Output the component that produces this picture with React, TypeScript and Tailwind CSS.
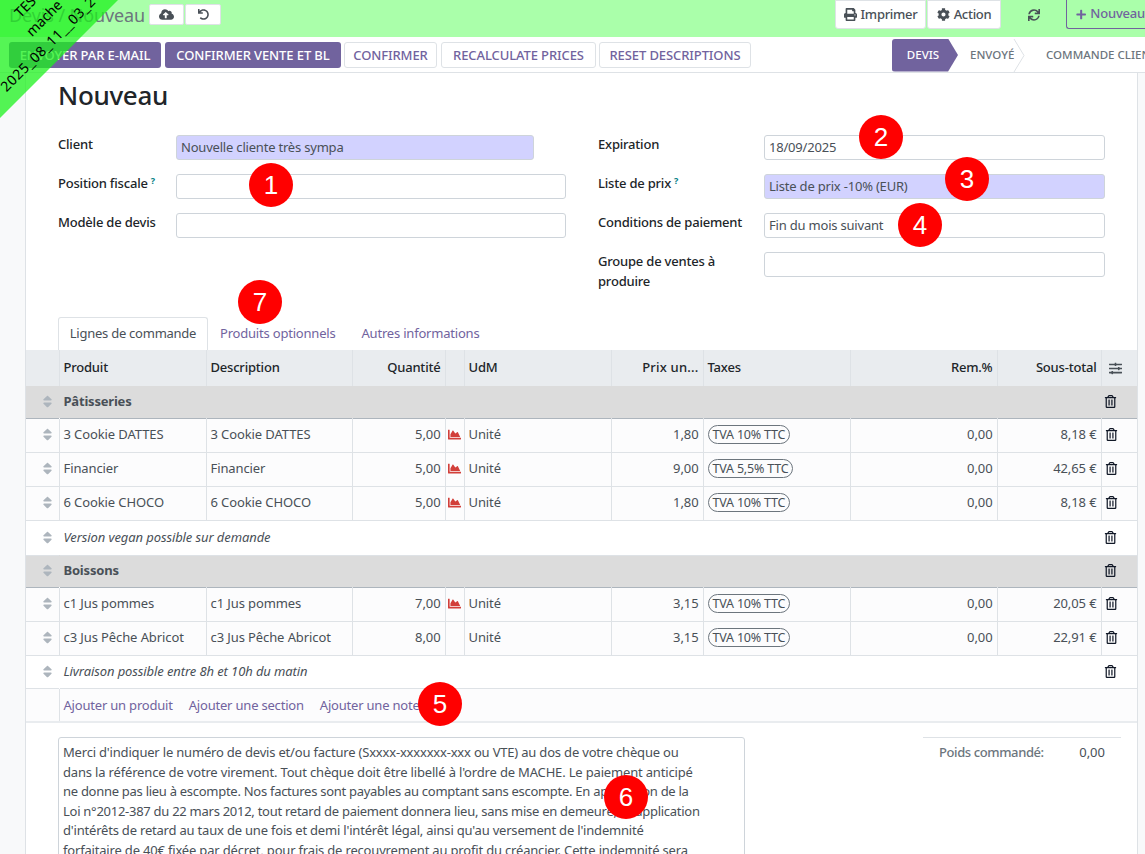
import React from "react";
import { FaCloudUploadAlt, FaUndo, FaPrint, FaCog, FaSync, FaPlus, FaRegTrashAlt, FaChartArea, FaSlidersH, FaSort } from "react-icons/fa";

function Badge({ n, cls }: { n: string; cls: string }) {
  return (
    <div className={"absolute z-20 h-[44px] w-[44px] rounded-full bg-[#ff0000] flex items-center justify-center text-white text-[26px] font-['Liberation_Sans'] " + cls}>{n}</div>
  );
}

function Field({ label, help, value, filled, short, right }: { label: React.ReactNode; help?: boolean; value?: string; filled?: boolean; short?: boolean; right?: boolean }) {
  return (
    <div className="flex h-[39px] items-start">
      <div className={(right ? "w-[166px]" : "w-[118px]") + " text-[13px] leading-[19.5px] font-medium text-[#212529] tracking-[-0.2px]"}>
        {label}
        {help && <sup className="ml-[3px] text-[9px] font-bold text-[#017e84]">?</sup>}
      </div>
      <div className={"h-[25px] rounded-[3px] border border-[#ced4da] px-1 text-[13px] leading-[23px] text-[#495057] tracking-[-0.2px] " + (filled ? "bg-[#d2d2ff] " : "bg-white ") + (short ? "w-[358px]" : right ? "w-[341px]" : "w-[390px]")}>
        {value}
      </div>
    </div>
  );
}

function Btn({ children, primary, cls }: { children: React.ReactNode; primary?: boolean; cls: string }) {
  return (
    <div className={"h-[26px] shrink-0 rounded-[3px] flex items-center justify-center pt-[1px] text-[13px] font-medium tracking-[-0.1px] " + (primary ? "bg-[#71639e] text-white " : "bg-white text-[#71639e] border border-[#dee2e6] ") + cls}>
      {children}
    </div>
  );
}

const cell = "border-l border-[#dee2e6] px-1 overflow-hidden whitespace-nowrap tracking-[-0.1px]";

function Handle() {
  return <td className="text-center pl-[11px]"><FaSort className="inline-block -translate-y-[1px] text-[#adb5bd] text-[15px]" /></td>;
}

function Trash() {
  return <FaRegTrashAlt className="inline-block -translate-y-[1px] text-[13px] text-[#111827]" />;
}

function ProductRow({ name, qty, chart, price, tax, total, h }: { name: string; qty: string; chart: boolean; price: string; tax: string; total: string; h: string }) {
  return (
    <tr className={"bg-[#fcfcfd] border-b border-[#dee2e6] " + h}>
      <Handle />
      <td className={cell}>{name}</td>
      <td className={cell}>{name}</td>
      <td className={cell + " text-right"}>{qty}</td>
      <td className={cell + " text-center !px-0"}>{chart && <FaChartArea className="inline-block -translate-y-[1px] text-[13px] text-[#d23f3a]" />}</td>
      <td className={cell}>Unité</td>
      <td className={cell + " text-right"}>{price}</td>
      <td className={cell}>
        <span className="inline-block rounded-full border border-[#6c757d] px-[4px] text-[12.5px] leading-[17px] text-[#495057] tracking-[-0.2px]">{tax}</span>
      </td>
      <td className={cell + " text-right"}>0,00</td>
      <td className={cell + " text-right"}>{total}</td>
      <td className={cell + " pl-[3px]"}><Trash /></td>
    </tr>
  );
}

function SectionRow({ name, h }: { name: string; h: string }) {
  return (
    <tr className={"bg-[#dcdcdc] border-b border-[#adb5bd] " + h}>
      <Handle />
      <td colSpan={9} className="px-1 font-bold text-[#495057] border-l border-transparent">{name}</td>
      <td className="pl-[3px]"><Trash /></td>
    </tr>
  );
}

function NoteRow({ text, h }: { text: string; h: string }) {
  return (
    <tr className={"bg-white border-b border-[#dee2e6] " + h}>
      <Handle />
      <td colSpan={9} className="px-1 italic tracking-[-0.1px] border-l border-transparent">{text}</td>
      <td className="pl-[3px]"><Trash /></td>
    </tr>
  );
}

function Th({ children, right }: { children?: React.ReactNode; right?: boolean }) {
  return <th className={"border-l border-[#dee2e6] px-1 font-medium text-[#212529] " + (right ? "text-right" : "text-left")}>{children}</th>;
}

const lines: [string, string][] = [
  ["Merci d'indiquer le numéro de devis et/ou facture (Sxxxx-xxxxxxx-xxx ou VTE) au dos de votre chèque ou", "tracking-[-0.19px]"],
  ["dans la référence de votre virement. Tout chèque doit être libellé à l'ordre de MACHE. Le paiement anticipé", "tracking-[-0.17px]"],
  ["ne donne pas lieu à escompte. Nos factures sont payables au comptant sans escompte. En application de la", "tracking-[-0.28px]"],
  ["Loi n°2012-387 du 22 mars 2012, tout retard de paiement donnera lieu, sans mise en demeure, à l'application", "tracking-[-0.27px]"],
  ["d'intérêts de retard au taux de une fois et demi l'intérêt légal, ainsi qu'au versement de l'indemnité", "tracking-[-0.2px]"],
  ["forfaitaire de 40€ fixée par décret, pour frais de recouvrement au profit du créancier. Cette indemnité sera", "tracking-[-0.18px]"],
];

export default function App() {
  return (
    <div className="relative h-[854px] w-[1145px] overflow-hidden bg-white font-['Noto_Sans',sans-serif] text-[13px] text-[#495057]">
      {/* top bar */}
      <div className="flex h-[37px] items-start bg-[#aaffaa]">
        <div className="ml-[9px] mt-[3px] w-[140px] text-[18px] leading-[24px] text-[#6c757d] tracking-[-0.1px] whitespace-nowrap">Devis / Nouveau</div>
        <div className="mt-[4px] flex gap-[1px]">
          <div className="flex h-[21px] w-[35px] items-center justify-center rounded-[2px] bg-white border border-[#dee2e6]"><FaCloudUploadAlt className="text-[15px] text-[#495057]" /></div>
          <div className="flex h-[21px] w-[36px] items-center justify-center rounded-[2px] bg-white border border-[#dee2e6]"><FaUndo className="text-[11px] text-[#495057]" /></div>
        </div>
        <div className="ml-auto flex h-[29px] items-center">
          <div className="flex h-[29px] w-[91px] items-center justify-center gap-1 rounded-b-[3px] bg-white border border-[#dee2e6] font-medium tracking-[-0.3px]"><FaPrint className="text-[13px]" />Imprimer</div>
          <div className="ml-[1px] flex h-[29px] w-[74px] items-center justify-center gap-1 rounded-b-[3px] bg-white border border-[#dee2e6] font-medium tracking-[-0.3px]"><FaCog className="text-[13px]" />Action</div>
          <div className="flex w-[65px] justify-center"><FaSync className="text-[12px] text-[#495057]" /></div>
          <div className="flex h-[29px] w-[79px] items-center gap-1 rounded-bl-[3px] border-l border-b border-[#71639e] pl-[9px] font-medium text-[#71639e] tracking-[-0.2px] whitespace-nowrap"><FaPlus className="text-[11px]" />Nouveau</div>
        </div>
      </div>

      {/* action row */}
      <div className="flex h-[36px] items-center border-b border-[#dee2e6] bg-white pl-[9px] pt-[1px]">
        <Btn primary cls="w-[152px]">ENVOYER PAR E-MAIL</Btn>
        <Btn primary cls="ml-[4px] w-[176px]">CONFIRMER VENTE ET BL</Btn>
        <Btn cls="ml-[3px] w-[93px]">CONFIRMER</Btn>
        <Btn cls="ml-[4px] w-[155px]">RECALCULATE PRICES</Btn>
        <Btn cls="ml-[3px] w-[152px]">RESET DESCRIPTIONS</Btn>
        <div className="ml-[141px] flex h-[34px] shrink-0 items-center self-start overflow-hidden text-[11.5px] font-medium whitespace-nowrap">
          <div className="flex h-[33px] w-[66px] shrink-0 items-center justify-center rounded-l-[3px] bg-[#71639e] pr-[4px] text-white [clip-path:polygon(0_0,85%_0,100%_50%,85%_100%,0_100%)]">DEVIS</div>
          <div className="relative flex h-[33px] w-[67px] shrink-0 items-center pl-[12px] text-[#6c757d]">
            ENVOYÉ
            <svg className="absolute right-0 top-0" width="12" height="33" viewBox="0 0 12 33"><path d="M1 0 L11 16.5 L1 33" fill="none" stroke="#dee2e6" /></svg>
          </div>
          <div className="pl-[21px] text-[#6c757d]">COMMANDE CLIENT</div>
        </div>
      </div>

      {/* body */}
      <div className="flex h-[781px]">
        <div className="w-[26px] shrink-0 bg-[#f8f9fa] border-r border-[#dee2e6]" />
        <div className="w-[1111px] shrink-0 bg-white">
          <div className="pl-[32px] pt-[5px] text-[26px] leading-[34px] font-medium text-[#212529] tracking-[-0.3px]">Nouveau</div>
          <div className="mt-[23px] flex pl-[32px]">
            <div className="w-[540px]">
              <Field label="Client" value="Nouvelle cliente très sympa" filled short />
              <Field label="Position fiscale" help />
              <Field label="Modèle de devis" />
            </div>
            <div>
              <Field right label="Expiration" value="18/09/2025" />
              <Field right label="Liste de prix" help value="Liste de prix -10% (EUR)" filled />
              <Field right label="Conditions de paiement" value="Fin du mois suivant" />
              <Field right label={<span className="block w-[140px]">Groupe de ventes à produire</span>} />
            </div>
          </div>

          {/* tabs */}
          <div className="mt-[26px] flex h-[33px] items-end pl-[32px] tracking-[-0.2px]">
            <div className="flex h-[33px] w-[150px] items-center justify-center rounded-t-[3px] border border-b-0 border-[#dee2e6] bg-white text-[#495057] tracking-[-0.25px]">Lignes de commande</div>
            <div className="flex h-[33px] items-center pl-[12px] text-[#71639e]">Produits optionnels</div>
            <div className="flex h-[33px] items-center pl-[26px] text-[#71639e]">Autres informations</div>
          </div>

          {/* table */}
          <table className="w-[1111px] table-fixed border-collapse tracking-[-0.2px]">
            <colgroup>
              <col className="w-[33px]" /><col className="w-[147px]" /><col className="w-[146px]" /><col className="w-[93px]" /><col className="w-[19px]" /><col className="w-[147px]" /><col className="w-[92px]" /><col className="w-[147px]" /><col className="w-[147px]" /><col className="w-[104px]" /><col className="w-[36px]" />
            </colgroup>
            <thead>
              <tr className="h-[36px] bg-[#e9ecef]">
                <th />
                <Th>Produit</Th>
                <Th>Description</Th>
                <Th right>Quantité</Th>
                <Th />
                <Th>UdM</Th>
                <Th right><span className="tracking-[0.2px]">Prix un...</span></Th>
                <Th>Taxes</Th>
                <Th right>Rem.%</Th>
                <Th right>Sous-total</Th>
                <Th><FaSlidersH className="inline-block text-[13px] text-[#495057] ml-[3px]" /></Th>
              </tr>
            </thead>
            <tbody>
              <SectionRow name="Pâtisseries" h="h-[32px]" />
              <ProductRow h="h-[34px]" name="3 Cookie DATTES" qty="5,00" chart price="1,80" tax="TVA 10% TTC" total="8,18 €" />
              <ProductRow h="h-[34px]" name="Financier" qty="5,00" chart price="9,00" tax="TVA 5,5% TTC" total="42,65 €" />
              <ProductRow h="h-[34px]" name="6 Cookie CHOCO" qty="5,00" chart price="1,80" tax="TVA 10% TTC" total="8,18 €" />
              <NoteRow h="h-[35px]" text="Version vegan possible sur demande" />
              <SectionRow name="Boissons" h="h-[32px]" />
              <ProductRow h="h-[34px]" name="c1 Jus pommes" qty="7,00" chart price="3,15" tax="TVA 10% TTC" total="20,05 €" />
              <ProductRow h="h-[34px]" name="c3 Jus Pêche Abricot" qty="8,00" chart={false} price="3,15" tax="TVA 10% TTC" total="22,91 €" />
              <NoteRow h="h-[33px]" text="Livraison possible entre 8h et 10h du matin" />
              <tr className="h-[34px] bg-[#fcfcfd] border-b-[2px] border-[#e9ecef]">
                <td />
                <td colSpan={10} className="border-l border-[#dee2e6] px-1 pt-[1px] text-[#71639e]">
                  <span>Ajouter un produit</span>
                  <span className="ml-[16px]">Ajouter une section</span>
                  <span className="ml-[16px]">Ajouter une note</span>
                </td>
              </tr>
            </tbody>
          </table>

          {/* footer */}
          <div className="mt-[14px] flex items-start pl-[32px]">
            <div className="h-[140px] w-[687px] shrink-0 overflow-hidden rounded-t-[3px] border border-[#ced4da] px-1 pt-[5px] leading-[19.5px]">
              {lines.map(([l, t]) => (
                <div key={l} className={"whitespace-nowrap " + t}>{l}</div>
              ))}
            </div>
            <div className="ml-[178px] flex w-[198px] justify-between border-t border-[#dee2e6] pl-[16px] pr-[16px] pt-[5px] leading-[19.5px]">
              <span className="font-medium text-[#6c757d] tracking-[-0.4px]">Poids commandé:</span>
              <span>0,00</span>
            </div>
          </div>
        </div>
        <div className="flex-1 bg-[#f8f9fa] border-l border-[#dee2e6]" />
      </div>

      {/* annotation badges */}
      <Badge n="1" cls="left-[249px] top-[163px]" />
      <Badge n="2" cls="left-[859px] top-[115px]" />
      <Badge n="3" cls="left-[945px] top-[157px]" />
      <Badge n="4" cls="left-[898px] top-[203px]" />
      <Badge n="5" cls="left-[418px] top-[682px]" />
      <Badge n="6" cls="left-[604px] top-[775px]" />
      <Badge n="7" cls="left-[238px] top-[280px]" />

      {/* test ribbon */}
      <div className="absolute left-0 top-0 z-30 h-[118px] w-[118px] overflow-hidden bg-[#1cf21c]/75 [clip-path:polygon(0_0,100%_0,0_100%)] text-[14px] leading-[18px] text-black">
        <span className="absolute left-[28px] top-[4px] -translate-x-1/2 -translate-y-1/2 -rotate-45 whitespace-nowrap">TEST</span>
        <span className="absolute left-[44px] top-[18px] -translate-x-1/2 -translate-y-1/2 -rotate-45 whitespace-nowrap">mache</span>
        <span className="absolute left-[51px] top-[41px] -translate-x-1/2 -translate-y-1/2 -rotate-45 whitespace-nowrap tracking-[0.5px]">2025_08_11__03_21</span>
      </div>
    </div>
  );
}
